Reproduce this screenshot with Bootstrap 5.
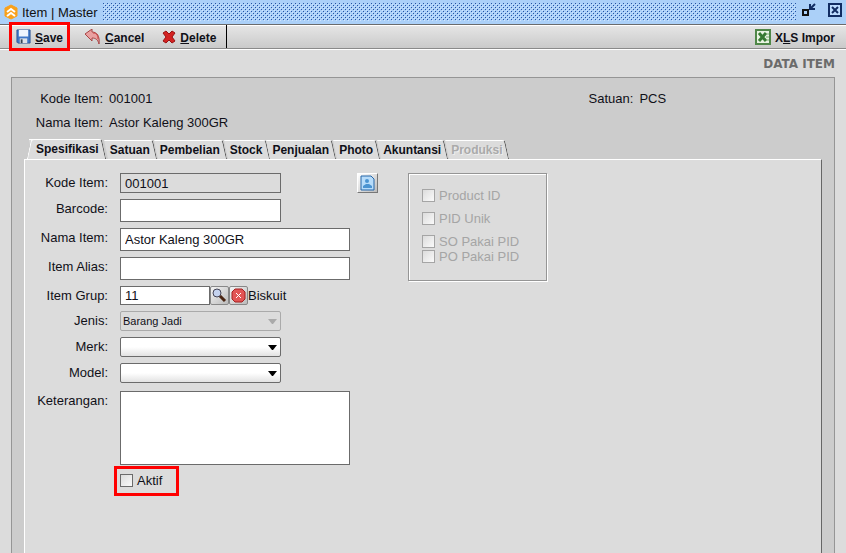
<!DOCTYPE html>
<html lang="id">
<head>
<meta charset="utf-8">
<meta name="viewport" content="width=device-width, initial-scale=1">
<title>Item | Master</title>
<link href="https://cdn.jsdelivr.net/npm/bootstrap@5.3.0/dist/css/bootstrap.min.css" rel="stylesheet">
<style>
body{font-family:"Liberation Sans",Arial,sans-serif;font-size:13px;line-height:19px;color:#101018;background:#dcdcdc}
svg{display:block;flex:none}
.app-title{height:24px;background:#abd0f8;padding:0 4px 0 4px;color:#111}
.dots{height:18px;margin:0 6px 0 5px;background:conic-gradient(from 270deg at 1px 1px,#2453a3 90deg,transparent 0) 0 0/4px 4px,conic-gradient(from 270deg at 1px 1px,#2453a3 90deg,transparent 0) 2px 2px/4px 4px,conic-gradient(from 270deg at 1px 1px,#cfe5fd 90deg,transparent 0) 3px 3px/4px 4px,conic-gradient(from 270deg at 1px 1px,#cfe5fd 90deg,transparent 0) 1px 1px/4px 4px}
.plain{border:0;background:none;padding:0;color:inherit;line-height:inherit}
.win-buttons{gap:12px;padding-bottom:4px}
.tools{height:25px;border-top:1px solid #6b6b6b;border-bottom:1px solid #8a8a8a;background:linear-gradient(#e6e6e6,#cacaca);font-size:12px;font-weight:bold;box-shadow:0 1px #fff,inset 0 1px #fff}
.tools .plain{display:flex;align-items:center;gap:4px;font-weight:bold}
.tools span{padding-top:3px}
.tools .tool-save{width:61px;height:29px;margin:-4px 14px -4px 9px;border:3px solid #f00;padding:0 4px;gap:4px;position:relative}
.tool-end{border-right:1px solid #000;height:23px}
.tools .tool-end{padding:0 10px 0 2px;margin-left:16px}
.tools .tool-xls{margin:0 11px 0 auto}
.heading{font:bold 12px/16px "DejaVu Sans",Verdana,sans-serif;color:#6b6b6b;padding:7px 11px 5px}
.outer{margin:0 11px;background:#ccc;border:1px solid #959595;border-bottom:0;padding:11px 12px 0}
.info{height:24px;gap:6px}
.info-label{width:79px;text-align:right;flex:none}
.info-left{width:70%;gap:6px}
.tabs{padding-left:4px;font-size:12px;font-weight:bold;margin-top:2px}
.tab{position:relative;height:19px;border:0;background:none;padding:2px 6px 0 4px;font-weight:bold;line-height:17px;color:#101018;margin-top:1px}
.tab::before{content:"";position:absolute;z-index:-1;inset:0 1px 0 0;background:#dcdcdc;border-top:1px solid #fff;border-right:1px solid #555;border-radius:0 3px 0 0;transform:skewX(12deg)}
.tab.active{height:20px;margin-top:0;padding:1px 6px 0 8px;margin-right:1px}
.tab.active::before{inset:0 1px 0 3px}
.tab.active::after{content:"";position:absolute;z-index:-1;inset:0 50% 0 1px;background:#dcdcdc;border-top:1px solid #fff;border-left:1px solid #fff;border-radius:3px 0 0 0;transform:skewX(-12deg)}
.tab:disabled{color:#aaa;text-shadow:1px 1px #eee}
.tabwrap{position:relative;z-index:0}
.pane{background:#dcdcdc;border:1px solid #fff;border-right-color:#666;border-bottom:0;padding:13px 0 12px}
.fields{width:325px;display:grid;grid-template-columns:83px 1fr;column-gap:12px;row-gap:6px}
.fields>label{text-align:right;white-space:nowrap}
.fields>.area-label{padding-top:2px}
.box{display:block;border:1px solid #6b6b6b;border-radius:0;background:#fff;padding:0 4px;height:23px;width:100%;color:inherit;outline:0}
.short{width:161px}.low{height:19px}.code{width:90px}
.box:read-only{background:#dcdcdc;height:20px}
textarea.box{height:74px;resize:none;margin-top:2px}
.pick{height:20px;width:161px;border:1px solid #6b6b6b;border-radius:2px;appearance:none;padding:0 2px;font-size:11px;color:#101018;background:linear-gradient(#fff 50%,#e2e2e2)}
.pickwrap{position:relative;width:161px}
.pickwrap svg{position:absolute;right:4px;top:8px;pointer-events:none}
.pick:disabled{background:#dcdcdc;border-color:#aaa;opacity:1}
.mini{width:19px;height:19px;border:1px solid #888;border-radius:2px;background:linear-gradient(135deg,#f4f4f4,#bbb);padding:1px}
.photo{width:21px;height:20px;border:1px solid;border-color:#fff #777 #777 #fff;background:linear-gradient(135deg,#fff,#bbb);padding:0 2px;margin-left:7px;flex:none}
.tick{appearance:none;width:13px;height:13px;border:1px solid #6b6b6b;background:linear-gradient(135deg,#dcdcdc,#fafafa);margin:0;flex:none}
.tick:disabled{border-color:#a5a5a5}
.group{width:139px;height:108px;border:1px solid #959595;box-shadow:1px 1px #fff,inset 1px 1px #fff;margin-left:30px;padding:14px 13px;color:#a5a5a5}
.group label,.active-row label{display:flex;align-items:center;gap:4px;white-space:nowrap}
.group label{height:15px;margin-bottom:8px}
.group label:nth-child(3){margin-bottom:0}
.active-row{width:65px;height:30px;margin:-5px 0 0 -6px;padding:2px 3px;border:3px solid #f00}
</style>
<script src="https://cdn.jsdelivr.net/npm/bootstrap@5.3.0/dist/js/bootstrap.bundle.min.js"></script>
</head>
<body class="min-vh-100 d-flex flex-column">
<header class="app-title d-flex align-items-center">
<svg width="14" height="16" viewBox="0 0 14 16"><path d="M7 1 13 4v8L7 15 1 12V4Z" fill="#f9a11b" stroke="#f9a11b" stroke-linejoin="round"/><path d="m3 8 4-3 4 3M3 12l4-3 4 3" fill="none" stroke="#fff" stroke-width="2"/></svg>
<span class="ms-1 text-nowrap">Item | Master</span><div class="dots flex-fill"></div>
<div class="win-buttons d-flex"><button class="plain" aria-label="Pulihkan"><svg width="14" height="14" viewBox="0 0 14 14" fill="none" stroke="#112d63" stroke-width="2"><path d="M1 7h5v5H1Z" stroke="#111"/><path d="M13 1 9 5M8 1v5h5"/></svg></button>
<button class="plain" aria-label="Tutup"><svg width="14" height="14" viewBox="0 0 14 14"><path d="M1 1h12v12H1Z" fill="#bdddff" stroke="#112d63" stroke-width="2"/><path d="m4 4 6 6m0-6-6 6" stroke="#112d63" stroke-width="2"/></svg></button></div>
</header>
<nav class="tools d-flex align-items-center">
<button class="plain tool-save"><svg width="15" height="15" viewBox="0 0 16 16"><path d="M1 1h14v14H2l-1-1Z" fill="#3f78c9" stroke="#2d5695"/><path d="M3 1h10v7H3Z" fill="#eef5ff"/><path d="M4 10h8v5H4Z" fill="#dde2ea"/><path d="M5 11h2v4H5Z" fill="#345"/></svg><span><u>S</u>ave</span></button>
<button class="plain"><svg width="17" height="16" viewBox="0 0 17 16"><path d="M1 5 8 0v3c5 0 8 4 7 12-1-4-3-6-7-6v3Z" fill="#e9a0a0" stroke="#a84444"/><path d="M9 4c4 0 5 3 5 6" fill="none" stroke="#c44"/></svg><span><u>C</u>ancel</span></button>
<button class="plain tool-end"><svg width="14" height="14" viewBox="0 0 14 14"><path d="m1 3 3-2 3 3 3-3 3 2-3 4 3 4-3 2-3-3-3 3-3-2 3-4Z" fill="#d32323" stroke="#991212"/></svg><span><u>D</u>elete</span></button>
<button class="plain tool-xls"><svg width="16" height="16" viewBox="0 0 16 16"><path d="M1 1h14v14H1Z" fill="#e8f3e2" stroke="#4f8748" stroke-width="2"/><path d="m4 4 7 8m0-8-7 8" stroke="#377a32" stroke-width="3"/><path d="M11 5h3M11 8h3M11 11h3" stroke="#75aa6c"/></svg><span>X<u>L</u>S Impor</span></button>
</nav>
<h1 class="heading m-0 text-end">DATA ITEM</h1>
<main class="outer flex-fill d-flex flex-column">
<div class="d-flex info"><div class="info-left d-flex"><span class="info-label">Kode Item:</span><span>001001</span></div><span>Satuan:</span><span>PCS</span></div>
<div class="d-flex info"><span class="info-label">Nama Item:</span><span>Astor Kaleng 300GR</span></div>
<div class="tabwrap flex-fill d-flex flex-column">
<div class="tabs d-flex" role="tablist">
<button class="tab active" role="tab">Spesifikasi</button><button class="tab" role="tab">Satuan</button><button class="tab" role="tab">Pembelian</button><button class="tab" role="tab">Stock</button><button class="tab" role="tab">Penjualan</button><button class="tab" role="tab">Photo</button><button class="tab" role="tab">Akuntansi</button><button class="tab" role="tab" disabled>Produksi</button>
</div>
<section class="pane flex-fill d-flex align-items-start">
<div class="fields">
<label for="kode">Kode Item:</label><input id="kode" class="box short low" value="001001" readonly>
<label for="barcode">Barcode:</label><input id="barcode" class="box short">
<label for="nama">Nama Item:</label><input id="nama" class="box" value="Astor Kaleng 300GR">
<label for="alias">Item Alias:</label><input id="alias" class="box">
<label for="grup">Item Grup:</label><div class="d-flex"><input id="grup" class="box low code" value="11"><button class="mini" aria-label="Cari"><svg width="15" height="15" viewBox="0 0 15 15"><circle cx="5" cy="5" r="4" fill="#c4d2ee" stroke="#445"/><path d="m8 8 5 5" stroke="#4a2513" stroke-width="3"/></svg></button><button class="mini" aria-label="Hapus"><svg width="15" height="15" viewBox="0 0 15 15"><path d="M4 1h7l3 3v7l-3 3H4l-3-3V4Z" fill="#e25555" stroke="#a52020"/><path d="m5 5 5 5m0-5-5 5" stroke="#fff"/></svg></button><span>Biskuit</span></div>
<label for="jenis">Jenis:</label><div class="pickwrap"><select id="jenis" class="pick d-block" disabled><option>Barang Jadi</option></select><svg width="9" height="5"><path d="M0 0h9L5 5H4Z" fill="#aaa"/></svg></div>
<label for="merk">Merk:</label><div class="pickwrap"><select id="merk" class="pick d-block"><option></option></select><svg width="9" height="5"><path d="M0 0h9L5 5H4Z"/></svg></div>
<label for="model">Model:</label><div class="pickwrap"><select id="model" class="pick d-block"><option></option></select><svg width="9" height="5"><path d="M0 0h9L5 5H4Z"/></svg></div>
<label for="ket" class="area-label">Keterangan:</label><textarea id="ket" class="box"></textarea>
<span></span><div class="active-row"><label><input type="checkbox" class="tick">Aktif</label></div>
</div>
<button class="photo" aria-label="Foto"><svg width="15" height="16" viewBox="0 0 15 16"><path d="M1 1h10l3 3v11H1Z" fill="#b7dcfa" stroke="#2767a8"/><circle cx="7" cy="6" r="2" fill="#4b94d2"/><path d="M3 13v-2l3-2h3l3 2v2Z" fill="#4b94d2"/></svg></button>
<div class="group"><label><input type="checkbox" class="tick" disabled>Product ID</label><label><input type="checkbox" class="tick" disabled>PID Unik</label><label><input type="checkbox" class="tick" disabled>SO Pakai PID</label><label><input type="checkbox" class="tick" disabled>PO Pakai PID</label></div>
</section>
</div>
</main>
</body>
</html>
